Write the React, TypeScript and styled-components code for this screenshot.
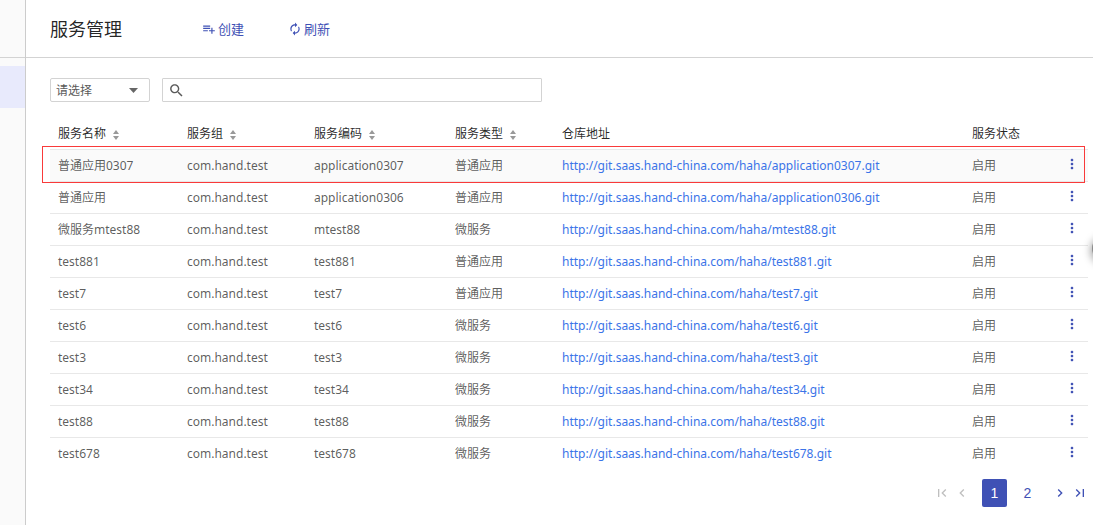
import React from 'react';
import styled, { createGlobalStyle, css } from 'styled-components';

const Global = createGlobalStyle`
  *, *::before, *::after { box-sizing: border-box; }
  body {
    margin: 0;
    background: #fff;
    font-family: "Noto Sans", "Noto Sans CJK SC", sans-serif;
    font-size: 12px;
    color: rgba(0, 0, 0, 0.65);
  }
  button, input, select { font: inherit; }
`;

const Shell = styled.div`
  display: flex;
  min-height: 100vh;
  position: relative;
  overflow: hidden;
`;

const Sidebar = styled.nav`
  flex: 0 0 26px;
  background: #fafafa;
  border-right: 1px solid #ccc;
`;

const SidebarTop = styled.div`
  height: 58px;
  margin-bottom: 8px;
  border-bottom: 1px solid #d3d3d3;
`;

const SidebarItem = styled.a`
  display: block;
  height: 42px;
  background: #e8eafc;
`;

const Main = styled.main`
  flex: 1;
  min-width: 0;
`;

const Header = styled.header`
  display: flex;
  align-items: center;
  height: 58px;
  padding: 0 24px;
  border-bottom: 1px solid #d3d3d3;
`;

const Title = styled.h1`
  margin: 0 80px 0 0;
  font-size: 18px;
  font-weight: 400;
  line-height: 24px;
  color: rgba(0, 0, 0, 0.87);
`;

const ActionButton = styled.button`
  display: flex;
  align-items: center;
  gap: 2px;
  margin-right: 44px;
  padding: 0;
  border: 0;
  background: none;
  font-size: 13px;
  line-height: 20px;
  color: #3f51b5;
`;

const Content = styled.section`
  padding: 20px 5px 0 24px;
`;

const Filters = styled.form`
  display: flex;
  gap: 12px;
  margin-bottom: 16px;
`;

const SelectBox = styled.div`
  position: relative;
  width: 100px;
  height: 24px;
  svg { position: absolute; right: 12px; top: 10px; pointer-events: none; }
`;

const Select = styled.select`
  width: 100%;
  height: 100%;
  padding: 0 5px;
  appearance: none;
  border: 1px solid #d3d3d3;
  border-radius: 2px;
  background: #fff;
  color: #595959;
`;

const SearchBox = styled.label`
  display: flex;
  align-items: center;
  gap: 6px;
  width: 380px;
  height: 24px;
  padding: 0 5px;
  border: 1px solid #d3d3d3;
  border-radius: 1px;
`;

const SearchInput = styled.input`
  flex: 1;
  min-width: 0;
  padding: 0;
  border: 0;
  outline: 0;
  background: none;
`;

const TableArea = styled.div`
  position: relative;
`;

const Table = styled.table`
  width: 100%;
  table-layout: fixed;
  border-collapse: separate;
  border-spacing: 0;
`;

const Col = styled.col<{ $width?: number }>`
  ${({ $width }) => $width && css`width: ${$width}px;`}
`;

const HeadCell = styled.th`
  height: 31px;
  padding: 0 8px;
  text-align: left;
  font-weight: 400;
  line-height: 18px;
  color: rgba(0, 0, 0, 0.85);
  white-space: nowrap;
  svg { margin-left: 7px; vertical-align: -2px; }
`;

const Row = styled.tr<{ $active?: boolean }>`
  background: ${({ $active }) => ($active ? '#fafafa' : '#fff')};
`;

const Cell = styled.td`
  height: 32px;
  padding: 0 8px;
  border-top: 1px solid #e8e8e8;
  line-height: 18px;
  white-space: nowrap;
`;

const RepoLink = styled.a`
  color: #3b74e8;
  text-decoration: none;
`;

const MoreButton = styled.button`
  display: flex;
  align-items: center;
  width: 16px;
  height: 16px;
  margin-bottom: 3px;
  padding: 0;
  border: 0;
  background: none;
  color: #3f51b5;
`;

const Highlight = styled.div`
  position: absolute;
  top: 28px;
  left: -8px;
  right: 3px;
  height: 37px;
  border: 1px solid #f93a3a;
  pointer-events: none;
`;

const Pager = styled.nav`
  display: flex;
  align-items: center;
  justify-content: flex-end;
  gap: 12px;
  margin-top: 10px;
`;

const PageGroup = styled.div`
  display: flex;
  gap: 8px;
`;

const PageButton = styled.button<{ $current?: boolean }>`
  width: 25px;
  height: 28px;
  padding: 0;
  border: 0;
  border-radius: 2px;
  font-family: "Liberation Sans", sans-serif;
  font-size: 14px;
  background: ${({ $current }) => ($current ? '#3f51b5' : 'transparent')};
  color: ${({ $current }) => ($current ? '#fff' : '#3f51b5')};
`;

const StepGroup = styled.div`
  display: flex;
  gap: 4px;
`;

const StepButton = styled.button`
  display: flex;
  align-items: center;
  justify-content: center;
  width: 16px;
  height: 28px;
  padding: 0;
  border: 0;
  background: none;
  color: #3f51b5;
  &:disabled { color: #bfbfbf; }
`;

const EdgeHandle = styled.div`
  position: absolute;
  top: 236px;
  right: -24px;
  width: 25px;
  height: 25px;
  border-radius: 50%;
  background: #888;
  box-shadow: 0 2px 8px 1px rgba(0, 0, 0, 0.4);
`;

const Sorter = () => (
  <svg width="6" height="10" viewBox="0 0 6 10" fill="#999" aria-hidden="true">
    <path d="M3 0L6 4H0zM3 10L6 6H0z" />
  </svg>
);

const Icon = ({ d, size }: { d: string; size: number }) => (
  <svg width={size} height={size} viewBox="0 0 24 24" fill="currentColor" aria-hidden="true">
    <path d={d} />
  </svg>
);

const icons = {
  add: 'M14 10H2v2h12v-2zm0-4H2v2h12V6zm4 8v-4h-2v4h-4v2h4v4h2v-4h4v-2h-4zM2 16h8v-2H2v2z',
  refresh:
    'M12 6v3l4-4-4-4v3c-4.42 0-8 3.58-8 8 0 1.57.46 3.03 1.24 4.26L6.7 14.8c-.45-.83-.7-1.79-.7-2.8 0-3.31 2.69-6 6-6zm6.76 1.74L17.3 9.2c.44.84.7 1.79.7 2.8 0 3.31-2.69 6-6 6v-3l-4 4 4 4v-3c4.42 0 8-3.58 8-8 0-1.57-.46-3.03-1.24-4.26z',
  search:
    'M15.5 14h-.79l-.28-.27C15.41 12.59 16 11.11 16 9.5 16 5.91 13.09 3 9.5 3S3 5.91 3 9.5 5.91 16 9.5 16c1.61 0 3.09-.59 4.23-1.57l.27.28v.79l5 4.99L20.49 19l-4.99-5zm-6 0C7.01 14 5 11.99 5 9.5S7.01 5 9.5 5 14 7.01 14 9.5 11.99 14 9.5 14z',
  more: 'M12 8c1.1 0 2-.9 2-2s-.9-2-2-2-2 .9-2 2 .9 2 2 2zm0 2c-1.1 0-2 .9-2 2s.9 2 2 2 2-.9 2-2-.9-2-2-2zm0 6c-1.1 0-2 .9-2 2s.9 2 2 2 2-.9 2-2-.9-2-2-2z',
  first: 'M18.41 16.59L13.82 12l4.59-4.59L17 6l-6 6 6 6zM6 6h2v12H6z',
  prev: 'M15.41 7.41L14 6l-6 6 6 6 1.41-1.41L10.83 12z',
  next: 'M10 6L8.59 7.41 13.17 12l-4.58 4.59L10 18l6-6z',
  last: 'M5.59 7.41L10.18 12l-4.59 4.59L7 18l6-6-6-6zM16 6h2v12h-2z',
};

const columns = [
  { title: '服务名称', width: 129, sortable: true },
  { title: '服务组', width: 127, sortable: true },
  { title: '服务编码', width: 141, sortable: true },
  { title: '服务类型', width: 107, sortable: true },
  { title: '仓库地址', sortable: false },
  { title: '服务状态', width: 92, sortable: false },
];

const services = [
  ['普通应用0307', 'application0307', '普通应用'],
  ['普通应用', 'application0306', '普通应用'],
  ['微服务mtest88', 'mtest88', '微服务'],
  ['test881', 'test881', '普通应用'],
  ['test7', 'test7', '普通应用'],
  ['test6', 'test6', '微服务'],
  ['test3', 'test3', '微服务'],
  ['test34', 'test34', '微服务'],
  ['test88', 'test88', '微服务'],
  ['test678', 'test678', '微服务'],
];

export default function App() {
  return (
    <>
      <Global />
      <Shell>
        <Sidebar>
          <SidebarTop />
          <SidebarItem href="#services" aria-label="服务管理" />
        </Sidebar>
        <Main>
          <Header>
            <Title>服务管理</Title>
            <ActionButton type="button"><Icon d={icons.add} size={14} />创建</ActionButton>
            <ActionButton type="button"><Icon d={icons.refresh} size={14} />刷新</ActionButton>
          </Header>
          <Content>
            <Filters>
              <SelectBox>
                <Select aria-label="请选择"><option>请选择</option></Select>
                <svg width="9" height="5" viewBox="0 0 9 5" fill="#666" aria-hidden="true"><path d="M0 0h9L4.5 5z" /></svg>
              </SelectBox>
              <SearchBox>
                <Icon d={icons.search} size={17} />
                <SearchInput type="text" aria-label="搜索" />
              </SearchBox>
            </Filters>
            <TableArea>
              <Table>
                <colgroup>
                  {columns.map((c) => <Col key={c.title} $width={c.width} />)}
                  <Col $width={32} />
                </colgroup>
                <thead>
                  <tr>
                    {columns.map((c) => (
                      <HeadCell key={c.title} scope="col">{c.title}{c.sortable && <Sorter />}</HeadCell>
                    ))}
                    <HeadCell />
                  </tr>
                </thead>
                <tbody>
                  {services.map(([name, code, type], i) => {
                    const url = `http://git.saas.hand-china.com/haha/${code}.git`;
                    return (
                      <Row key={code} $active={i === 0}>
                        <Cell>{name}</Cell>
                        <Cell>com.hand.test</Cell>
                        <Cell>{code}</Cell>
                        <Cell>{type}</Cell>
                        <Cell><RepoLink href={url}>{url}</RepoLink></Cell>
                        <Cell>启用</Cell>
                        <Cell><MoreButton type="button" aria-label="更多"><Icon d={icons.more} size={16} /></MoreButton></Cell>
                      </Row>
                    );
                  })}
                </tbody>
              </Table>
              <Highlight />
            </TableArea>
            <Pager aria-label="分页">
              <StepGroup>
                <StepButton type="button" disabled aria-label="首页"><Icon d={icons.first} size={16} /></StepButton>
                <StepButton type="button" disabled aria-label="上一页"><Icon d={icons.prev} size={16} /></StepButton>
              </StepGroup>
              <PageGroup>
                <PageButton type="button" $current aria-current="page">1</PageButton>
                <PageButton type="button">2</PageButton>
              </PageGroup>
              <StepGroup>
                <StepButton type="button" aria-label="下一页"><Icon d={icons.next} size={16} /></StepButton>
                <StepButton type="button" aria-label="末页"><Icon d={icons.last} size={16} /></StepButton>
              </StepGroup>
            </Pager>
          </Content>
        </Main>
        <EdgeHandle />
      </Shell>
    </>
  );
}
